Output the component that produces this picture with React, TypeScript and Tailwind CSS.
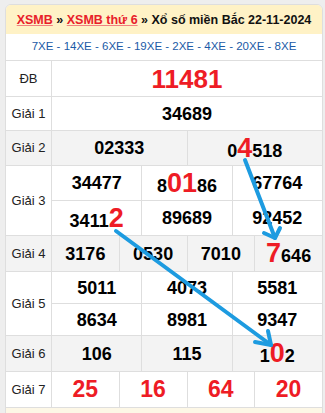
import React from 'react';

type Part = string | { r: string };

const font = { fontFamily: '"Liberation Sans", Arial, sans-serif' };

// Digits that get highlighted are bigger and red
function Num({ parts, className = '' }: { parts: Part[]; className?: string }) {
  return (
    <span className={`font-bold text-[18px] leading-none text-black ${className}`}>
      {parts.map((p, i) =>
        typeof p === 'string' ? (
          <span key={i}>{p}</span>
        ) : (
          <span key={i} className="text-[27px] leading-none text-[#ee1c25]">
            {p.r}
          </span>
        )
      )}
    </span>
  );
}

function Row({
  label,
  gray,
  h,
  children,
}: {
  label: string;
  gray?: boolean;
  h: string;
  children: React.ReactNode;
}) {
  return (
    <div className={`flex border-b border-[#dedede] ${gray ? 'bg-[#f3f3f3]' : 'bg-white'}`}>
      <div className={`w-[46px] shrink-0 border-r border-[#dedede] flex items-center justify-center text-[13px] text-[#222] ${h}`}>
        {label}
      </div>
      <div className="flex-1 flex flex-col">{children}</div>
    </div>
  );
}

function Cells({ items, h }: { items: Part[][]; h: string }) {
  return (
    <div className={`flex ${h}`}>
      {items.map((parts, i) => (
        <div
          key={i}
          className={`flex-1 flex items-center justify-center ${i > 0 ? 'border-l border-[#dedede]' : ''}`}
        >
          <Num parts={parts} />
        </div>
      ))}
    </div>
  );
}

export default function App() {
  return (
    <div className="relative w-[325px] h-[413px] bg-[#eeeeee] pl-[5px] pt-[4px] pr-[2px] overflow-hidden" style={font}>
      <div className="border border-[#dedede] rounded-t-[6px] bg-white overflow-hidden">
        <div className="h-[29px] pt-[1px] bg-[#fff2c6] flex items-center justify-center text-[12.5px] font-bold text-[#111] whitespace-nowrap">
          <span className="text-[#e8202a] underline decoration-[#f08080]">XSMB</span>
          <span>&nbsp;»&nbsp;</span>
          <span className="text-[#e8202a] underline decoration-[#f08080]">XSMB thứ 6</span>
          <span>&nbsp;»&nbsp;</span>
          <span>Xổ số miền Bắc 22-11-2024</span>
        </div>
        <div className="h-[27px] flex items-center justify-center text-[11.5px] text-[#1a5aa6] border-b border-[#dedede] whitespace-nowrap">
          7XE - 14XE - 6XE - 19XE - 2XE - 4XE - 20XE - 8XE
        </div>

        <Row label="ĐB" h="h-[35px]">
          <div className="h-[35px] flex items-center justify-center">
            <span className="font-bold text-[26px] leading-none text-[#ee1c25]">11481</span>
          </div>
        </Row>
        <Row label="Giải 1" h="h-[33px]">
          <Cells items={[['34689']]} h="h-[33px]" />
        </Row>
        <Row label="Giải 2" gray h="h-[34px]">
          <Cells items={[['02333'], ['0', { r: '4' }, '518']]} h="h-[34px]" />
        </Row>
        <Row label="Giải 3" h="h-[69px]">
          <div className="border-b border-[#dedede]">
            <Cells items={[['34477'], ['8', { r: '01' }, '86'], ['67764']]} h="h-[34px]" />
          </div>
          <Cells items={[['3411', { r: '2' }], ['89689'], ['92452']]} h="h-[34px]" />
        </Row>
        <Row label="Giải 4" gray h="h-[35px]">
          <Cells items={[['3176'], ['0530'], ['7010'], [{ r: '7' }, '646']]} h="h-[35px]" />
        </Row>
        <Row label="Giải 5" h="h-[63px]">
          <div className="border-b border-[#dedede]">
            <Cells items={[['5011'], ['4073'], ['5581']]} h="h-[31px]" />
          </div>
          <Cells items={[['8634'], ['8981'], ['9347']]} h="h-[31px]" />
        </Row>
        <Row label="Giải 6" gray h="h-[35px]">
          <Cells items={[['106'], ['115'], ['1', { r: '0' }, '2']]} h="h-[35px]" />
        </Row>
        <div className="flex bg-white border-b border-[#dedede]">
          <div className="w-[46px] shrink-0 border-r border-[#dedede] flex items-center justify-center text-[13px] text-[#222] h-[35px]">
            Giải 7
          </div>
          <div className="flex-1 flex">
            {['25', '16', '64', '20'].map((n, i) => (
              <div
                key={n}
                className={`flex-1 flex items-center justify-center ${i > 0 ? 'border-l border-[#dedede]' : ''}`}
              >
                <span className="font-bold text-[23px] leading-none text-[#ee1c25]">{n}</span>
              </div>
            ))}
          </div>
        </div>
        <div className="h-[10px] bg-[#fdf7e6]" />
      </div>

      {/* blue arrows drawn over the table */}
      <svg className="absolute inset-0 pointer-events-none" width="325" height="413" viewBox="0 0 325 413">
        <g stroke="#1d9be0" strokeWidth="4" strokeLinecap="round" strokeLinejoin="round" fill="none">
          <line x1="245" y1="160" x2="275" y2="238" />
          <polyline points="264,233 275,238 280,228" />
          <line x1="116" y1="231" x2="271" y2="345" />
          <polyline points="268,331 271,345 255,342" />
        </g>
      </svg>
    </div>
  );
}
